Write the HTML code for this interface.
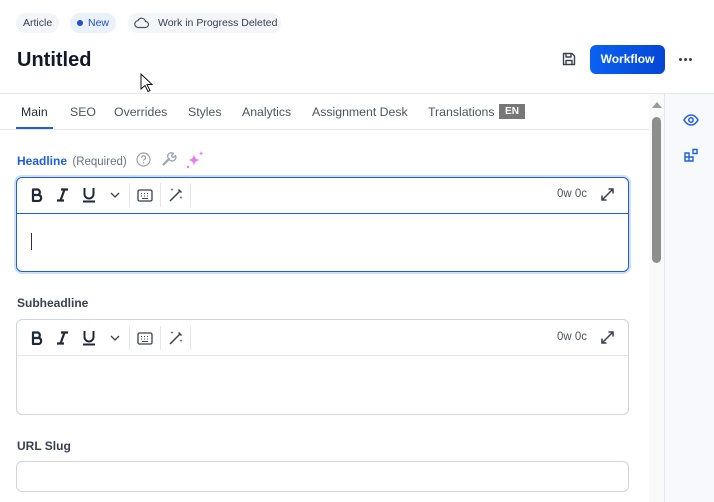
<!DOCTYPE html>
<html><head><meta charset="utf-8"><style>
*{box-sizing:border-box;margin:0;padding:0}
body{width:714px;height:502px;overflow:hidden;background:#fff;font-family:"Liberation Sans",sans-serif;color:#1f2937;position:relative}
.abs{position:absolute}
.pill{position:absolute;top:13px;height:20px;border-radius:10px;background:#f3f5f9;font-size:10.5px;line-height:20px;color:#374151;padding:0 7px;white-space:nowrap}
.tab{position:absolute;top:105px;font-size:12.3px;color:#4b5563;white-space:nowrap}
.box{position:absolute;left:16px;width:613px;border:1px solid #d1d5db;border-radius:6px;background:#fff}
.tb{height:36px;border-bottom:1px solid #e5e7eb;position:relative}
.lbl{position:absolute;left:17px;font-size:12px;font-weight:bold;color:#374151;white-space:nowrap}
</style></head><body>
<div class="pill" style="left:16px">Article</div>
<div class="pill" style="left:70px;background:#eaf1fd;color:#1d4ed8;padding-left:18px"><span class="abs" style="left:7px;top:7px;width:6px;height:6px;border-radius:50%;background:#1d4ed8"></span>New</div>
<div class="pill" style="left:128px;width:153px;padding-left:30px">
<svg class="abs" style="left:6px;top:3px" width="16" height="14" viewBox="0 0 16 14"><path d="M4.5 11.5h7a3 3 0 0 0 0-6 4 4 0 0 0-7.6-.8A3.4 3.4 0 0 0 4.5 11.5z" fill="none" stroke="#4b5563" stroke-width="1.2"/></svg>Work in Progress Deleted</div>
<div class="abs" style="left:17px;top:49px;font-size:20px;font-weight:bold;color:#111827">Untitled</div>
<svg class="abs" style="left:140px;top:73px" width="14" height="20" viewBox="0 0 14 20"><path d="M1 1v15l4-3.5 3 6 2-1-3-6h5z" fill="#fff" stroke="#111" stroke-width="1"/></svg>
<svg class="abs" style="left:561px;top:51px" width="16" height="16" viewBox="0 0 16 16"><path d="M2.5 2.5h8.5l2.5 2.5v8.5h-11z M5 2.5v3.5h5V2.5 M5 13.5V9.5h6v4" fill="none" stroke="#374151" stroke-width="1.4" stroke-linejoin="round"/></svg>
<div class="abs" style="left:590px;top:45px;width:75px;height:29px;border-radius:6px;background:linear-gradient(90deg,#0a62f0,#0646d6);color:#fff;font-size:12px;font-weight:bold;text-align:center;line-height:29px">Workflow</div>
<div class="abs" style="left:679px;top:58px;width:3px;height:3px;border-radius:50%;background:#374151"></div>
<div class="abs" style="left:684px;top:58px;width:3px;height:3px;border-radius:50%;background:#374151"></div>
<div class="abs" style="left:689px;top:58px;width:3px;height:3px;border-radius:50%;background:#374151"></div>
<div class="abs" style="left:0;top:93px;width:714px;height:1px;background:#e5e7eb"></div>
<div class="abs" style="left:664px;top:94px;width:50px;height:408px;background:#f8f9fc;border-left:1px solid #e5e7eb"></div>
<svg class="abs" style="left:683px;top:113px" width="16" height="14" viewBox="0 0 16 14"><path d="M1 7c2-3.5 4.5-5 7-5s5 1.5 7 5c-2 3.5-4.5 5-7 5S3 10.5 1 7z" fill="none" stroke="#1d5fe0" stroke-width="1.5"/><circle cx="8" cy="7" r="2.2" fill="none" stroke="#1d5fe0" stroke-width="1.5"/></svg>
<svg class="abs" style="left:684px;top:148px" width="15" height="15" viewBox="0 0 15 15"><path d="M1 5h4v4H1zM5 9h4v4H5zM1 9h4v4H1zM9 1.5h4v4H9z" fill="none" stroke="#1d5fe0" stroke-width="1.4"/></svg>
<div class="abs" style="left:649px;top:94px;width:15px;height:408px;background:#fafafa"></div>
<svg class="abs" style="left:652px;top:101px" width="10" height="7"><path d="M0 7L5 1 10 7z" fill="#999"/></svg>
<div class="abs" style="left:652px;top:117px;width:9px;height:146px;border-radius:5px;background:#8e8e8e"></div>
<div class="tab" style="left:21px;color:#1f2937">Main</div>
<div class="abs" style="left:16px;top:127px;width:37px;height:2px;background:#1d5fe0"></div>
<div class="tab" style="left:70px">SEO</div>
<div class="tab" style="left:114px">Overrides</div>
<div class="tab" style="left:188px">Styles</div>
<div class="tab" style="left:242px">Analytics</div>
<div class="tab" style="left:312px">Assignment Desk</div>
<div class="tab" style="left:428px">Translations</div>
<div class="abs" style="left:499px;top:104px;width:26px;height:15px;background:#777;color:#fff;font-size:10px;font-weight:bold;text-align:center;line-height:15px">EN</div>
<div class="abs" style="left:0;top:129px;width:649px;height:1px;background:#e5e7eb"></div>
<div class="lbl" style="top:154px;color:#1d5fe0">Headline <span style="font-weight:normal;color:#6b7280;margin-left:2px;font-size:11.5px">(Required)</span></div>
<svg class="abs" style="left:136px;top:152px" width="15" height="15" viewBox="0 0 15 15"><circle cx="7.5" cy="7.5" r="6.5" fill="none" stroke="#9ca3af" stroke-width="1.2"/><path d="M5.7 5.8a1.9 1.9 0 1 1 2.6 1.7c-.6.3-.8.6-.8 1.3" fill="none" stroke="#9ca3af" stroke-width="1.2"/><circle cx="7.5" cy="10.8" r=".8" fill="#9ca3af"/></svg>
<svg class="abs" style="left:161px;top:151px" width="16" height="16" viewBox="0 0 16 16"><path d="M2.5 13.5l5.5-5.5" stroke="#9ca3af" stroke-width="2" stroke-linecap="round"/><path d="M8 8a3.5 3.5 0 0 1 4.5-5.5l-2 2 .5 1.5 1.5.5 2-2A3.5 3.5 0 0 1 8 8z" fill="none" stroke="#9ca3af" stroke-width="1.3" stroke-linejoin="round"/></svg>
<svg class="abs" style="left:185px;top:150px" width="20" height="20" viewBox="0 0 20 20"><path d="M9 4c.5 4 2 5.5 6 6-4 .5-5.5 2-6 6-.5-4-2-5.5-6-6 4-.5 5.5-2 6-6z" fill="#e879f9"/><path d="M16 1l.6 1.8 1.8.6-1.8.6L16 5.8l-.6-1.8-1.8-.6 1.8-.6z" fill="#e879f9"/><circle cx="3" cy="17" r="1.2" fill="#e879f9"/></svg>
<div class="box" style="top:177px;height:95px;border-color:#1d5fe0;box-shadow:0 0 0 2px #cfe0fb">
<div class="tb" style="border-bottom-color:#1d5fe0"></div>
<div class="abs" style="left:14px;top:55px;width:1px;height:17px;background:#333"></div>
</div>
<div class="lbl" style="top:296px">Subheadline</div>
<div class="box" style="top:319px;height:96px"><div class="tb"></div></div>
<div class="lbl" style="top:439px">URL Slug</div>
<div class="box" style="top:461px;height:31px"></div>
<script>
function tb(y){
var s='<svg class="abs" style="left:31px;top:'+(y+11)+'px" width="13" height="14" viewBox="0 0 13 14"><path d="M2 1.5h5a3 3 0 0 1 0 5.5H2zM2 7h5.8a3.1 3.1 0 0 1 0 6H2z" fill="none" stroke="#1f2937" stroke-width="2.2" stroke-linejoin="round"/></svg>'+
'<svg class="abs" style="left:56px;top:'+(y+11)+'px" width="13" height="14" viewBox="0 0 13 14"><path d="M5 1.5h7M1 12.5h7M8.5 1.5l-4 11" fill="none" stroke="#1f2937" stroke-width="2.2"/></svg>'+
'<svg class="abs" style="left:82px;top:'+(y+10)+'px" width="14" height="16" viewBox="0 0 14 16"><path d="M2.5 1v6a4.5 4.5 0 0 0 9 0V1M1 14.5h12" fill="none" stroke="#1f2937" stroke-width="2"/></svg>'+
'<svg class="abs" style="left:110px;top:'+(y+15)+'px" width="10" height="7"><path d="M1 1l4 4 4-4" fill="none" stroke="#374151" stroke-width="1.3"/></svg>'+
'<div class="abs" style="left:129px;top:'+(y+6)+'px;width:1px;height:24px;background:#e5e7eb"></div>'+
'<svg class="abs" style="left:137px;top:'+(y+12)+'px" width="16" height="13" viewBox="0 0 16 13"><rect x="1" y="1" width="14" height="11" rx="1.5" fill="none" stroke="#374151" stroke-width="1.3"/><path d="M4 4.5h1M7 4.5h1M10 4.5h1M4 7h1M7 7h1M10 7h1M5 9.5h6" stroke="#374151" stroke-width="1"/></svg>'+
'<div class="abs" style="left:160px;top:'+(y+6)+'px;width:1px;height:24px;background:#e5e7eb"></div>'+
'<svg class="abs" style="left:168px;top:'+(y+10)+'px" width="16" height="16" viewBox="0 0 16 16"><path d="M2 14L12 4M10.5 2.5l3 3" stroke="#374151" stroke-width="1.5" fill="none"/><path d="M4 1l.4 1.2 1.2.4-1.2.4L4 4.2l-.4-1.2-1.2-.4 1.2-.4zM13 9l.4 1.2 1.2.4-1.2.4L13 12.2l-.4-1.2-1.2-.4 1.2-.4z" fill="#374151"/></svg>'+
'<div class="abs" style="left:190px;top:'+(y+6)+'px;width:1px;height:24px;background:#e5e7eb"></div>'+
'<div class="abs" style="left:557px;top:'+(y+11)+'px;font-size:11.5px;color:#4b5563">0w 0c</div>'+
'<svg class="abs" style="left:600px;top:'+(y+10)+'px" width="15" height="15" viewBox="0 0 15 15"><path d="M2 13L13 2M8.5 2H13v4.5M2 8.5V13h4.5" fill="none" stroke="#374151" stroke-width="1.5"/></svg>';
document.body.insertAdjacentHTML('beforeend',s);}
tb(177);tb(320);
</script>
</body></html>
